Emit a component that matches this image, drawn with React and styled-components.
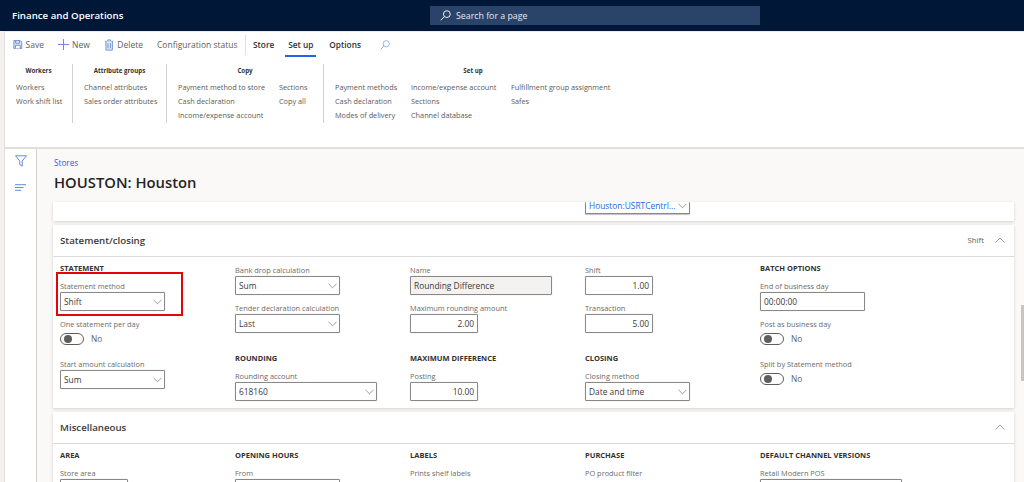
import React from 'react'
import styled, { createGlobalStyle } from 'styled-components'

const SearchIcon = ({ size = 11, color = '#fff' }) => (
    <svg width={size} height={size} viewBox="0 0 12 12" fill="none" stroke={color} strokeWidth="1">
        <circle cx="7.5" cy="4.5" r="3.7" />
        <path d="M4.8 7.2 L0.8 11.2" />
    </svg>
)

const Chevron = ({ up, color = '#7a7876', size = 10 }) => (
    <svg width={size} height="6" viewBox="0 0 10 6" fill="none" stroke={color} strokeWidth="0.8">
        <path d={up ? 'M0.5 5.5 L5 1 L9.5 5.5' : 'M0.5 0.5 L5 5 L9.5 0.5'} />
    </svg>
)

const SaveIcon = () => (
    <svg width="11" height="11" viewBox="0 0 11 11" fill="none" stroke="#6c8fd8" strokeWidth="1.1">
        <path d="M1 1 H8.3 L10 2.7 V10 H1 Z" fill="#dfe7f8" />
        <path d="M3 1 V4 H7.5 V1" />
        <path d="M2.8 10 V6.4 H8.2 V10" fill="#fff" />
    </svg>
)

const PlusIcon = () => (
    <svg width="11" height="11" viewBox="0 0 11 11" fill="none" stroke="#6c8fd8" strokeWidth="1">
        <path d="M5.5 0 V11 M0 5.5 H11" />
    </svg>
)

const DeleteIcon = () => (
    <svg width="9" height="12" viewBox="0 0 9 12" fill="none" stroke="#6c8fd8" strokeWidth="1">
        <path d="M0 2 H9 M3 2 V0.5 H6 V2" />
        <path d="M1 2 V11.5 H8 V2" fill="#dfe7f8" />
        <path d="M3.2 4 V9.5 M5.8 4 V9.5" />
    </svg>
)

const FilterIcon = () => (
    <svg width="12" height="12" viewBox="0 0 12 12" fill="none" stroke="#4f7fe0" strokeWidth="0.9">
        <path d="M0.5 0.8 H11.5 L7.2 6 V11.2 L4.8 9.6 V6 Z" />
    </svg>
)

const LinesIcon = () => (
    <svg width="11" height="7" viewBox="0 0 11 7" fill="none" stroke="#4f7fe0" strokeWidth="0.9">
        <path d="M0 0.7 H11 M0 3.5 H8.5 M0 6.3 H6" />
    </svg>
)

const Dropdown = ({ value, width, link, cut }) => (
    <Control $width={width} $cut={cut}>
        <ControlText $link={link}>{value}</ControlText>
        <Chevron size={9} />
    </Control>
)

const Switch = ({ tone, label }) => (
    <SwitchRow>
        <SwitchTrack $tone={tone}>
            <SwitchKnob $tone={tone} />
        </SwitchTrack>
        {label && <SwitchLabel>{label}</SwitchLabel>}
    </SwitchRow>
)

const ribbonGroups = [
    { title: 'Workers', cols: '45px', columns: [['Workers', 'Work shift list']] },
    { title: 'Attribute groups', cols: '71px', columns: [['Channel attributes', 'Sales order attributes']] },
    {
        title: 'Copy',
        cols: '101px 33px',
        columns: [
            ['Payment method to store', 'Cash declaration', 'Income/expense account'],
            ['Sections', 'Copy all'],
        ],
    },
    {
        title: 'Set up',
        cols: '76px 100px 100px',
        columns: [
            ['Payment methods', 'Cash declaration', 'Modes of delivery'],
            ['Income/expense account', 'Sections', 'Channel database'],
            ['Fulfillment group assignment', 'Safes'],
        ],
    },
]

export default function App() {
    return (
        <Page>
            <GlobalStyle />
            <TopBar>
                <Brand>Finance and Operations</Brand>
                <SearchBox>
                    <SearchIcon />
                    <span>Search for a page</span>
                </SearchBox>
            </TopBar>
            <Shell>
                <Gutter />
                <Workspace>
                    <Ribbon>
                        <Toolbar>
                            <ToolButton $w={31}><SaveIcon /><span>Save</span></ToolButton>
                            <ToolButton $w={33}><PlusIcon /><span>New</span></ToolButton>
                            <ToolButton $w={38} $gap={4}><DeleteIcon /><span>Delete</span></ToolButton>
                            <ToolButton $w={81} $last><span>Configuration status</span></ToolButton>
                            <ToolDivider />
                            <Tab>Store</Tab>
                            <Tab $active>Set up</Tab>
                            <Tab>Options</Tab>
                            <RibbonSearch><SearchIcon size={10} color="#8aa6e6" /></RibbonSearch>
                        </Toolbar>
                        <GroupRow>
                            {ribbonGroups.map((group) => (
                                <Group key={group.title}>
                                    <GroupTitle>{group.title}</GroupTitle>
                                    <GroupColumns $cols={group.cols}>
                                        {group.columns.map((col, i) => (
                                            <div key={i}>
                                                {col.map((item) => <GroupItem key={item}>{item}</GroupItem>)}
                                            </div>
                                        ))}
                                    </GroupColumns>
                                </Group>
                            ))}
                        </GroupRow>
                    </Ribbon>
                    <Main>
                        <Rail>
                            <FilterIcon />
                            <LinesIcon />
                        </Rail>
                        <Content>
                            <Crumb>Stores</Crumb>
                            <Title>HOUSTON: Houston</Title>

                            <ScrolledCard>
                                <FieldGrid $scrolled>
                                    <div /><div /><div />
                                    <div><Dropdown value="Houston:USRTCentrl..." width={105} link cut /></div>
                                </FieldGrid>
                            </ScrolledCard>

                            <Card>
                                <CardHeader>
                                    <CardTitle>Statement/closing</CardTitle>
                                    <CardSummary>Shift</CardSummary>
                                    <Chevron up color="#8a8886" />
                                </CardHeader>
                                <FieldGrid>
                                    <div>
                                        <Heading $first>Statement</Heading>
                                        <Field>
                                            <Label>Statement method</Label>
                                            <Dropdown value="Shift" width={105} />
                                            <Highlight />
                                        </Field>
                                        <Field>
                                            <Label>One statement per day</Label>
                                            <Switch label="No" />
                                        </Field>
                                        <Field>
                                            <Label>Start amount calculation</Label>
                                            <Dropdown value="Sum" width={105} />
                                        </Field>
                                    </div>
                                    <div>
                                        <Field>
                                            <Label>Bank drop calculation</Label>
                                            <Dropdown value="Sum" width={105} />
                                        </Field>
                                        <Field>
                                            <Label>Tender declaration calculation</Label>
                                            <Dropdown value="Last" width={105} />
                                        </Field>
                                        <Heading>Rounding</Heading>
                                        <Field>
                                            <Label>Rounding account</Label>
                                            <Dropdown value="618160" width={142} />
                                        </Field>
                                    </div>
                                    <div>
                                        <Field>
                                            <Label>Name</Label>
                                            <Control $width={142} $disabled><ControlText>Rounding Difference</ControlText></Control>
                                        </Field>
                                        <Field>
                                            <Label>Maximum rounding amount</Label>
                                            <Control $width={68} $number><ControlText>2.00</ControlText></Control>
                                        </Field>
                                        <Heading>Maximum difference</Heading>
                                        <Field>
                                            <Label>Posting</Label>
                                            <Control $width={68} $number><ControlText>10.00</ControlText></Control>
                                        </Field>
                                    </div>
                                    <div>
                                        <Field>
                                            <Label>Shift</Label>
                                            <Control $width={68} $number><ControlText>1.00</ControlText></Control>
                                        </Field>
                                        <Field>
                                            <Label>Transaction</Label>
                                            <Control $width={68} $number><ControlText>5.00</ControlText></Control>
                                        </Field>
                                        <Heading>Closing</Heading>
                                        <Field>
                                            <Label>Closing method</Label>
                                            <Dropdown value="Date and time" width={105} />
                                        </Field>
                                    </div>
                                    <div>
                                        <Heading $first>Batch options</Heading>
                                        <Field>
                                            <Label>End of business day</Label>
                                            <Control $width={105}><ControlText>00:00:00</ControlText></Control>
                                        </Field>
                                        <Field>
                                            <Label>Post as business day</Label>
                                            <Switch label="No" />
                                        </Field>
                                        <Field>
                                            <Label>Split by Statement method</Label>
                                            <Switch label="No" />
                                        </Field>
                                    </div>
                                </FieldGrid>
                            </Card>

                            <Card>
                                <CardHeader>
                                    <CardTitle>Miscellaneous</CardTitle>
                                    <Chevron up color="#8a8886" />
                                </CardHeader>
                                <FieldGrid>
                                    <div>
                                        <Heading $first>Area</Heading>
                                        <Field>
                                            <Label>Store area</Label>
                                            <Control $width={68} />
                                        </Field>
                                    </div>
                                    <div>
                                        <Heading $first>Opening hours</Heading>
                                        <Field>
                                            <Label>From</Label>
                                            <Control $width={105} />
                                        </Field>
                                    </div>
                                    <div>
                                        <Heading $first>Labels</Heading>
                                        <Field>
                                            <Label>Prints shelf labels</Label>
                                            <Switch tone="on" />
                                        </Field>
                                    </div>
                                    <div>
                                        <Heading $first>Purchase</Heading>
                                        <Field>
                                            <Label>PO product filter</Label>
                                            <Switch tone="muted" />
                                        </Field>
                                    </div>
                                    <div>
                                        <Heading $first>Default channel versions</Heading>
                                        <Field>
                                            <Label>Retail Modern POS</Label>
                                            <Control $width={142} />
                                        </Field>
                                    </div>
                                </FieldGrid>
                            </Card>
                        </Content>
                        <ScrollThumb />
                    </Main>
                </Workspace>
            </Shell>
        </Page>
    )
}

const GlobalStyle = createGlobalStyle`
html, body {
    margin: 0;
    height: 100%;
    overflow: hidden;
    background: #fff;
}
* {
    box-sizing: border-box;
}
`

const Page = styled.div`
width: 1024px;
height: 482px;
display: flex;
flex-direction: column;
overflow: hidden;
font-family: 'Open Sans', 'Noto Sans', sans-serif;
color: #323130;
`

const TopBar = styled.header`
height: 31px;
flex: none;
position: relative;
display: flex;
align-items: center;
padding-left: 12px;
background-color: #001737;
`

const Brand = styled.div`
width: 418px;
font-size: 9.7px;
font-weight: 600;
color: #fff;
white-space: nowrap;
`

const SearchBox = styled.div`
width: 330px;
height: 19px;
display: flex;
align-items: center;
gap: 5px;
padding-left: 10px;
background-color: #2a4368;
color: #e6e9ef;
font-size: 8.8px;
`

const Shell = styled.div`
flex: 1;
min-height: 0;
display: flex;
`

const Gutter = styled.div`
width: 5px;
flex: none;
background-color: #f3f2f1;
border-right: 1px solid #e1dfdd;
`

const Workspace = styled.div`
flex: 1;
min-width: 0;
display: flex;
flex-direction: column;
`

const Ribbon = styled.div`
height: 118px;
flex: none;
background-color: #fff;
border-bottom: 2px solid #e1dfdd;
border-top: 1px solid #edebe9;
`

const Toolbar = styled.div`
height: 25px;
display: flex;
align-items: center;
padding-left: 8px;
font-size: 8.5px;
color: #605e5c;
`

const ToolButton = styled.div`
width: ${(props) => props.$w}px;
margin-right: ${(props) => (props.$last ? '7px' : '14px')};
display: flex;
align-items: center;
gap: ${(props) => props.$gap || 3}px;
white-space: nowrap;
`

const ToolDivider = styled.div`
width: 1px;
height: 20px;
margin-right: 3px;
background-color: #e1dfdd;
`

const Tab = styled.div`
position: relative;
height: 25px;
width: ${(props) => (props.$active ? '31px' : 'auto')};
margin: ${(props) => (props.$active ? '0 9px 0 7px' : '0 4px')};
display: flex;
align-items: center;
justify-content: center;
font-size: 8.3px;
font-weight: 600;
color: #323130;
white-space: nowrap;
&::after {
    content: '';
    display: ${(props) => (props.$active ? 'block' : 'none')};
    position: absolute;
    left: 0;
    right: 0;
    bottom: 0;
    height: 2px;
    background-color: #2266e3;
}
`

const RibbonSearch = styled.div`
margin-left: 15px;
display: flex;
`

const GroupRow = styled.div`
display: flex;
padding-top: 7px;
`

const Group = styled.div`
height: 59px;
padding: 0 11px;
border-right: 1px solid #d2d0ce;
&:last-child {
    border-right: none;
}
`

const GroupTitle = styled.div`
height: 13px;
margin-bottom: 3px;
text-align: center;
font-size: 6.2px;
line-height: 13px;
font-weight: 700;
color: #323130;
white-space: nowrap;
`

const GroupColumns = styled.div`
display: grid;
grid-template-columns: ${(props) => props.$cols};
`

const GroupItem = styled.div`
height: 14.1px;
font-size: 7.3px;
line-height: 14.1px;
color: #5c5a58;
white-space: nowrap;
`

const Main = styled.div`
flex: 1;
min-height: 0;
position: relative;
display: flex;
overflow: hidden;
`

const Rail = styled.nav`
width: 32px;
flex: none;
display: flex;
flex-direction: column;
align-items: center;
gap: 17px;
padding: 6px 0 0 0;
background-color: #fff;
border-right: 1px solid #d2d0ce;
`

const Content = styled.div`
flex: 1;
min-width: 0;
padding: 7px 10px 0 16px;
background-color: #faf9f8;
`

const Crumb = styled.div`
height: 13px;
padding-left: 1px;
font-size: 8.2px;
line-height: 13px;
color: #2266e3;
`

const Title = styled.h1`
height: 20px;
margin: 3px 0 0;
padding-left: 1px;
font-size: 14.8px;
line-height: 20px;
font-weight: 600;
color: #252423;
white-space: nowrap;
`

const Card = styled.section`
margin-bottom: 4px;
background-color: #fff;
box-shadow: 0 1px 3px rgba(0, 0, 0, 0.16);
`

const ScrolledCard = styled(Card)`
margin-top: 10px;
height: 19px;
`

const CardHeader = styled.div`
height: 32px;
display: flex;
align-items: center;
padding: 0 9px 1px 7px;
border-bottom: 1px solid #dcdbd9;
`

const CardTitle = styled.h2`
flex: 1;
margin: 0;
font-size: 9.7px;
font-weight: 600;
color: #3b3a39;
`

const CardSummary = styled.span`
margin-right: 11px;
font-size: 7.8px;
color: #605e5c;
`

const FieldGrid = styled.div`
display: grid;
grid-template-columns: repeat(5, 175px);
padding: ${(props) => (props.$scrolled ? '0' : '7px')} 0 7px 7px;
`

const Heading = styled.h3`
height: 12px;
margin: ${(props) => (props.$first ? '-2px' : '19px')} 0 6px;
font-size: 7.5px;
line-height: 12px;
font-weight: 700;
color: #323130;
text-transform: uppercase;
white-space: nowrap;
`

const Field = styled.div`
position: relative;
margin-bottom: 7px;
&:last-child {
    margin-bottom: 0;
}
`

// red annotation drawn over the form in the screenshot
const Highlight = styled.div`
position: absolute;
left: -4px;
top: -8px;
width: 127px;
height: 44px;
border: 2px solid #e8000b;
pointer-events: none;
`

const Label = styled.label`
display: block;
height: 12px;
font-size: 7.4px;
line-height: 12px;
color: #6d6b69;
white-space: nowrap;
`

const Control = styled.div`
width: ${(props) => props.$width}px;
height: ${(props) => (props.$cut ? '12px' : '19px')};
display: flex;
align-items: center;
justify-content: ${(props) => (props.$number ? 'flex-end' : 'space-between')};
padding: 0 ${(props) => (props.$number ? '3px' : '2px')} ${(props) => (props.$cut ? '4px' : '0')} 3px;
background-color: ${(props) => (props.$disabled ? '#f3f2f1' : '#fff')};
border: 1px solid #8a8886;
border-top: ${(props) => (props.$cut ? 'none' : '1px solid #8a8886')};
border-radius: 1px;
box-shadow: 0 ${(props) => (props.$cut ? '1px' : '0')} 1px rgba(0, 0, 0, 0.25);
`

const ControlText = styled.span`
padding-top: 1px;
font-size: 8.4px;
line-height: 1;
color: ${(props) => (props.$link ? '#2266e3' : '#3b3a39')};
white-space: nowrap;
`

const SwitchRow = styled.div`
height: 21px;
display: flex;
align-items: flex-start;
gap: 7px;
padding-top: 3px;
`

const SwitchTrack = styled.div`
width: 24px;
height: 12px;
display: flex;
align-items: center;
padding-left: 3px;
border-radius: 6px;
border: 1px solid ${(props) => (props.$tone === 'on' ? '#2266e3' : '#605e5c')};
background-color: ${(props) => {
    if (props.$tone === 'on') return '#2266e3'
    if (props.$tone === 'muted') return '#c8c6c4'
    return '#fff'
}};
`

const SwitchKnob = styled.div`
width: 8px;
height: 8px;
border-radius: 50%;
background-color: ${(props) => (props.$tone === 'on' ? '#fff' : '#605e5c')};
`

const SwitchLabel = styled.span`
font-size: 8.4px;
line-height: 12px;
color: #605e5c;
`

const ScrollThumb = styled.div`
position: absolute;
right: 0;
top: 156px;
width: 3px;
height: 76px;
background-color: #c8c6c4;
`
